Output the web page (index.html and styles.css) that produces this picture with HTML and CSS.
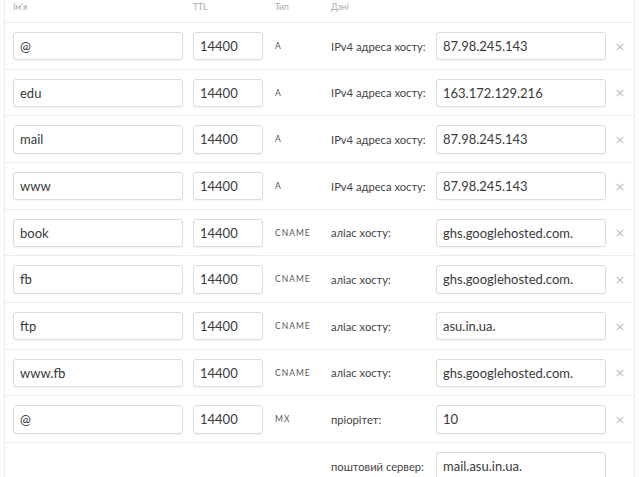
FILE: index.html
```html
<!DOCTYPE html>
<html lang="uk">
<head>
<meta charset="utf-8">
<link rel="stylesheet" href="styles.css">
</head>
<body>
<div class="table">
  <div class="row head">
    <div class="c-name">Ім'я</div>
    <div class="c-ttl">TTL</div>
    <div class="c-type">Тип</div>
    <div class="c-label">Дані</div>
  </div>

  <div class="row">
    <div class="c-name"><input class="inp name" value="@"></div>
    <div class="c-ttl"><input class="inp ttl" value="14400"></div>
    <div class="c-type">A</div>
    <div class="c-label">IPv4 адреса хосту:</div>
    <div class="c-data"><input class="inp data" value="87.98.245.143"></div>
    <div class="c-del">×</div>
  </div>

  <div class="row">
    <div class="c-name"><input class="inp name" value="edu"></div>
    <div class="c-ttl"><input class="inp ttl" value="14400"></div>
    <div class="c-type">A</div>
    <div class="c-label">IPv4 адреса хосту:</div>
    <div class="c-data"><input class="inp data" value="163.172.129.216"></div>
    <div class="c-del">×</div>
  </div>

  <div class="row">
    <div class="c-name"><input class="inp name" value="mail"></div>
    <div class="c-ttl"><input class="inp ttl" value="14400"></div>
    <div class="c-type">A</div>
    <div class="c-label">IPv4 адреса хосту:</div>
    <div class="c-data"><input class="inp data" value="87.98.245.143"></div>
    <div class="c-del">×</div>
  </div>

  <div class="row">
    <div class="c-name"><input class="inp name" value="www"></div>
    <div class="c-ttl"><input class="inp ttl" value="14400"></div>
    <div class="c-type">A</div>
    <div class="c-label">IPv4 адреса хосту:</div>
    <div class="c-data"><input class="inp data" value="87.98.245.143"></div>
    <div class="c-del">×</div>
  </div>

  <div class="row">
    <div class="c-name"><input class="inp name" value="book"></div>
    <div class="c-ttl"><input class="inp ttl" value="14400"></div>
    <div class="c-type">CNAME</div>
    <div class="c-label">аліас хосту:</div>
    <div class="c-data"><input class="inp data" value="ghs.googlehosted.com."></div>
    <div class="c-del">×</div>
  </div>

  <div class="row">
    <div class="c-name"><input class="inp name" value="fb"></div>
    <div class="c-ttl"><input class="inp ttl" value="14400"></div>
    <div class="c-type">CNAME</div>
    <div class="c-label">аліас хосту:</div>
    <div class="c-data"><input class="inp data" value="ghs.googlehosted.com."></div>
    <div class="c-del">×</div>
  </div>

  <div class="row">
    <div class="c-name"><input class="inp name" value="ftp"></div>
    <div class="c-ttl"><input class="inp ttl" value="14400"></div>
    <div class="c-type">CNAME</div>
    <div class="c-label">аліас хосту:</div>
    <div class="c-data"><input class="inp data" value="asu.in.ua."></div>
    <div class="c-del">×</div>
  </div>

  <div class="row">
    <div class="c-name"><input class="inp name" value="www.fb"></div>
    <div class="c-ttl"><input class="inp ttl" value="14400"></div>
    <div class="c-type">CNAME</div>
    <div class="c-label">аліас хосту:</div>
    <div class="c-data"><input class="inp data" value="ghs.googlehosted.com."></div>
    <div class="c-del">×</div>
  </div>

  <div class="row">
    <div class="c-name"><input class="inp name" value="@"></div>
    <div class="c-ttl"><input class="inp ttl" value="14400"></div>
    <div class="c-type">MX</div>
    <div class="c-label">пріорітет:</div>
    <div class="c-data"><input class="inp data" value="10"></div>
    <div class="c-del">×</div>
  </div>

  <div class="row">
    <div class="c-name"></div>
    <div class="c-ttl"></div>
    <div class="c-type"></div>
    <div class="c-label">поштовий сервер:</div>
    <div class="c-data"><input class="inp data" value="mail.asu.in.ua."></div>
    <div class="c-del"></div>
  </div>
</div>
</body>
</html>
```

FILE: styles.css
```css
html, body {
  margin: 0;
  padding: 0;
  background: #fff;
}

body {
  font-family: Lato, "Open Sans", "Liberation Sans", sans-serif;
  color: #444;
  overflow: hidden;
}

.table {
  margin-left: 4px;
  width: 629px;
  border-left: 1px solid #ececec;
  border-right: 1px solid #ececec;
}

.row {
  display: flex;
  align-items: center;
  padding: 9px 0 8.33px 8px;
  border-bottom: 1px solid #ededed;
}

.row.head {
  height: 22px;
  padding: 0 0 0 8px;
  align-items: flex-start;
  font-size: 8.5px;
  color: #aaa;
  line-height: 14px;
}

.c-name { width: 180px; }
.c-ttl { width: 82px; }
.c-type {
  width: 56px;
  font-size: 8.5px;
  letter-spacing: 1px;
  color: #555;
}
.head .c-type { letter-spacing: 0; color: #aaa; }
.c-label {
  width: 105px;
  font-size: 11.2px;
  color: #444;
}
.head .c-label { font-size: 8.5px; color: #aaa; }
.c-data { width: 170px; }
.c-del {
  width: 28px;
  text-align: center;
  color: #c2c2c2;
  font-size: 13px;
  font-family: "DejaVu Sans", sans-serif;
  line-height: 1;
}

.inp {
  box-sizing: border-box;
  display: block;
  height: 28.33px;
  border: 1px solid #dcdcdc;
  border-radius: 3px;
  box-shadow: 0 1px 1px rgba(0, 0, 0, 0.04);
  padding: 0 6px;
  font-family: Lato, "Open Sans", "Liberation Sans", sans-serif;
  font-size: 13px;
  color: #3a3a3a;
  background: #fff;
  outline: none;
}

.inp.name { width: 170px; }
.inp.ttl { width: 70px; }
.inp.data { width: 170px; }
```
